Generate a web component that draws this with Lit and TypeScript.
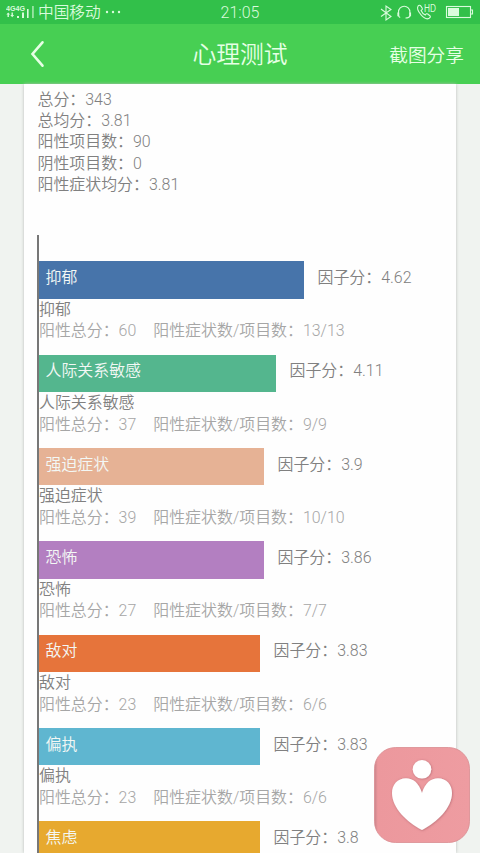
import { LitElement, html, css, svg, nothing } from "lit";
import { customElement } from "lit/decorators.js";

interface Factor {
  name: string;
  score: string;
  total?: number;
  items?: string;
  width: number;
  color: string;
}

const summary = ["总分：343", "总均分：3.81", "阳性项目数：90", "阴性项目数：0", "阳性症状均分：3.81"];

const factors: Factor[] = [
  { name: "抑郁", score: "4.62", total: 60, items: "13/13", width: 265, color: "#4774aa" },
  { name: "人际关系敏感", score: "4.11", total: 37, items: "9/9", width: 237, color: "#54b68e" },
  { name: "强迫症状", score: "3.9", total: 39, items: "10/10", width: 225, color: "#e6b295" },
  { name: "恐怖", score: "3.86", total: 27, items: "7/7", width: 225, color: "#b37fc1" },
  { name: "敌对", score: "3.83", total: 23, items: "6/6", width: 221, color: "#e6743b" },
  { name: "偏执", score: "3.83", total: 23, items: "6/6", width: 221, color: "#5fb6d0" },
  { name: "焦虑", score: "3.8", width: 221, color: "#e7a92f" },
];

@customElement("status-bar")
class StatusBar extends LitElement {
  static styles = css`
    :host { display: grid; grid-template-columns: 1fr auto 1fr; align-items: center; height: 24px; background: #32c04a; color: #d9fbdc; font-size: 16px; line-height: 24px; }
    .left { display: flex; align-items: center; padding-left: 6px; gap: 4px; }
    .right { display: flex; justify-content: flex-end; padding-right: 6px; }
    svg { display: block; }
    .net { font: 700 7px/7px "Liberation Sans", sans-serif; }
    .hd { font: 400 10px "Liberation Sans", sans-serif; }
    .carrier { padding-top: 1px; font-size: 15.7px; line-height: 23px; }
    .time { padding-top: 2px; line-height: 22px; }
  `;
  render() {
    return html`
      <div class="left">
        <svg width="28" height="22" viewBox="0 0 28 22" fill="#d9fbdc">
          <text class="net" x="0" y="9.6" textLength="19" lengthAdjust="spacingAndGlyphs">4G4G</text>
          <path d="M1.500 16v-2.500H.3L2.200 11.500l1.900 2H2.900V16zM5.500 11.500V14H4.300l1.900 2.200L8.100 14H6.900v-2.500zM11 15h2v2h-2zM16 11.500h2V17h-2zM21 8h1.600v9H21zM26.400 5h1.100v12h-1.100z" />
        </svg>
        <span class="carrier">中国移动</span>
        <svg width="17" height="4" viewBox="0 0 17 4" fill="#d9fbdc"><circle cx="2" cy="2" r="1.2" /><circle cx="8" cy="2" r="1.2" /><circle cx="14" cy="2" r="1.2" /></svg>
      </div>
      <span class="time">21:05</span>
      <div class="right">
        <svg width="94" height="24" viewBox="380 0 94 24" fill="none" stroke="#d9fbdc" stroke-width="1.1">
          <path d="M381 9l10 7.5-5 3.500V6l5 3.500-10 7" />
          <path d="M398.500 13.500V12a5.700 5.700 0 0 1 11.400 0v1.500" />
          <path d="M398.300 12.500v3.700M410.100 12.500v3.700" stroke-width="1.900" />
          <path d="M410 16c-.6 1.400-1.800 2-4.500 2M398.600 16c.3.700.8 1.200 1.600 1.500" />
          <path d="M418 6.200c1-1.200 2-1.300 2.700-.3l1.600 2.300c.5.8 0 1.400-1.200 2.300.8 2 2.200 3.600 4.200 4.500.9-1.200 1.600-1.600 2.400-1l2.200 1.700c.9.8.5 1.700-.8 2.600-2 1.200-5.300-.3-8-3.400-2.900-3.400-4.200-6.900-3.100-8.700z" />
          <text class="hd" x="424" y="12" textLength="12" lengthAdjust="spacingAndGlyphs" fill="#d9fbdc" stroke="none">HD</text>
          <rect x="446.500" y="6.500" width="24" height="11" />
          <rect x="448" y="8" width="11" height="8" fill="#d9fbdc" stroke="none" />
          <path d="M471 10h1.500v4H471" />
        </svg>
      </div>
    `;
  }
}

@customElement("nav-bar")
class NavBar extends LitElement {
  static styles = css`
    :host { display: grid; grid-template-columns: 1fr auto 1fr; align-items: center; height: 60px; background: #47cf53; color: #e6ffe5; }
    svg { display: block; margin-left: 30px; }
    .title { padding-top: 2px; font-size: 23.8px; line-height: 58px; }
    .share { justify-self: end; margin-right: 16px; padding-top: 5px; font-size: 18.7px; }
  `;
  render() {
    return html`
      <svg width="15" height="28" viewBox="0 0 15 28" fill="none" stroke="#e6ffe5" stroke-width="2.6" stroke-linecap="round"><path d="M12.500 2.300L2.500 14l10 11.700" /></svg>
      <span class="title">心理测试</span>
      <span class="share">截图分享</span>
    `;
  }
}

@customElement("factor-row")
class FactorRow extends LitElement {
  static properties = { factor: { attribute: false } };
  declare factor: Factor;
  static styles = css`
    :host { display: block; height: 93.33px; line-height: 21.33px; color: #808080; }
    .top { display: flex; gap: 13.5px; height: 37.33px; }
    .bar { box-sizing: border-box; padding: 5.7px 0 0 6.5px; color: #f3f8f5; }
    .score { padding-top: 5.7px; }
    .detail { display: flex; gap: 17px; padding-top: 0.5px; color: #a6a6a6; }
  `;
  render() {
    const f = this.factor;
    return html`
      <div class="top">
        <div class="bar" style="width:${f.width}px;background:${f.color}">${f.name}</div>
        <span class="score">因子分：${f.score}</span>
      </div>
      ${f.items
        ? html`<div>${f.name}</div>
            <div class="detail"><span>阳性总分：${f.total}</span><span>阳性症状数/项目数：${f.items}</span></div>`
        : nothing}
    `;
  }
}

const heartLogo = svg`
  <defs>
    <filter id="soft" x="-20%" y="-20%" width="140%" height="140%"><feDropShadow dx="0.5" dy="0.5" stdDeviation="1" flood-color="#99505a" flood-opacity=".65" /></filter>
    <linearGradient id="edge" x1="0" y1="0" x2="1" y2="0"><stop offset="0" stop-color="#c9848a" /><stop offset=".035" stop-color="#ec989d" /><stop offset="1" stop-color="#ee9ca1" /></linearGradient>
  </defs>
  <rect x=".5" y=".5" width="95" height="95" rx="21" fill="url(#edge)" stroke="#d98b91" stroke-width=".8" />
  <g fill="#fff" filter="url(#soft)">
    <circle cx="48" cy="22.3" r="9.3" />
    <path d="M48 46C45 36 39 31.300 32 31.300C23.500 31.300 18 38 18 46C18 61 33 75 48 83C63 75 78 61 78 46C78 38 72.500 31.300 64 31.300C57 31.300 51 36 48 46Z" />
  </g>`;

@customElement("app-root")
class AppRoot extends LitElement {
  static styles = css`
    :host { display: block; position: relative; box-sizing: border-box; width: 480px; height: 853px; overflow: hidden; background: #f0f3f0; font: 350 15.93px/21.33px "Roboto", "Noto Sans CJK SC", sans-serif; color: #808080; }
    .card { box-sizing: border-box; height: 769px; margin: 0 24px; padding: 4.8px 0 0 13px; overflow: hidden; background: #fefefe; box-shadow: 0 0 3px #b8bcb9; }
    .summary { height: 146.2px; padding-left: 0.5px; }
    .chart { box-sizing: border-box; height: 640px; padding-top: 26.3px; border-left: 2px solid #777; }
    .logo { position: absolute; left: 374px; top: 747px; }
  `;
  render() {
    return html`
      <status-bar></status-bar>
      <nav-bar></nav-bar>
      <main class="card">
        <div class="summary">${summary.map((s) => html`<div>${s}</div>`)}</div>
        <div class="chart">${factors.map((f) => html`<factor-row .factor=${f}></factor-row>`)}</div>
      </main>
      <svg class="logo" width="96" height="96" viewBox="0 0 96 96">${heartLogo}</svg>
    `;
  }
}
